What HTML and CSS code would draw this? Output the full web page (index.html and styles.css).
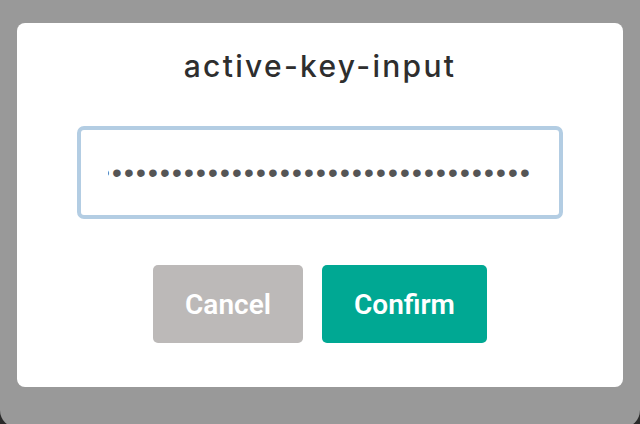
FILE: index.html
```html
<!DOCTYPE html>
<html lang="en">
<head>
    <meta charset="UTF-8">
    <meta name="viewport" content="width=device-width, initial-scale=1.0">
    <title>active-key-input</title>
    <link rel="stylesheet" href="styles.css">
</head>
<body>
    <div class="screen">
        <div class="dialog">
            <h1 class="dialog-title">active-key-input</h1>
            <input class="key-input" type="password" readonly
                   value="5KQwrPbwdL6PhXujxW37FSSQZ1JiwsST4cqQzDeyXtP79zkvFD3xx">
            <div class="actions">
                <button class="btn cancel-btn">Cancel</button>
                <button class="btn confirm-btn">Confirm</button>
            </div>
        </div>
    </div>
</body>
</html>
```

FILE: styles.css
```css
html, body {
    margin: 0;
    padding: 0;
    background-color: #2a2a2a;
}
.screen {
    width: 640px;
    height: 428px;
    background-color: #999999;
    border-radius: 0 0 18px 18px;
    padding: 23px 17px 0;
    box-sizing: border-box;
}
.dialog {
    width: 606px;
    height: 364px;
    background: #fff;
    border-radius: 8px;
    display: flex;
    flex-direction: column;
    align-items: center;
    box-sizing: border-box;
    padding-top: 23px;
}
.dialog-title {
    margin: 0;
    font-family: Inter, "Open Sans", sans-serif;
    font-weight: 500;
    font-size: 30px;
    letter-spacing: 2.3px;
    line-height: 40px;
    color: #2e2e2e;
}
.key-input {
    margin-top: 40px;
    width: 486px;
    height: 93px;
    box-sizing: border-box;
    border: 4px solid #b3cde3;
    border-radius: 7px;
    outline: none;
    padding: 0 27px;
    direction: rtl;
    font-family: "Liberation Sans", Arial, sans-serif;
    font-size: 28px;
    letter-spacing: 2.2px;
    color: #555;
    background: #fff;
}
.actions {
    margin-top: 46px;
    display: flex;
    gap: 19px;
}
.btn {
    height: 78px;
    padding: 0 32px;
    border: none;
    border-radius: 5px;
    color: #fff;
    font-family: Roboto, sans-serif;
    font-weight: 600;
    font-size: 28px;
    cursor: pointer;
}
.cancel-btn {
    background-color: #bcb9b8;
}
.confirm-btn {
    background-color: #00a893;
}
```
